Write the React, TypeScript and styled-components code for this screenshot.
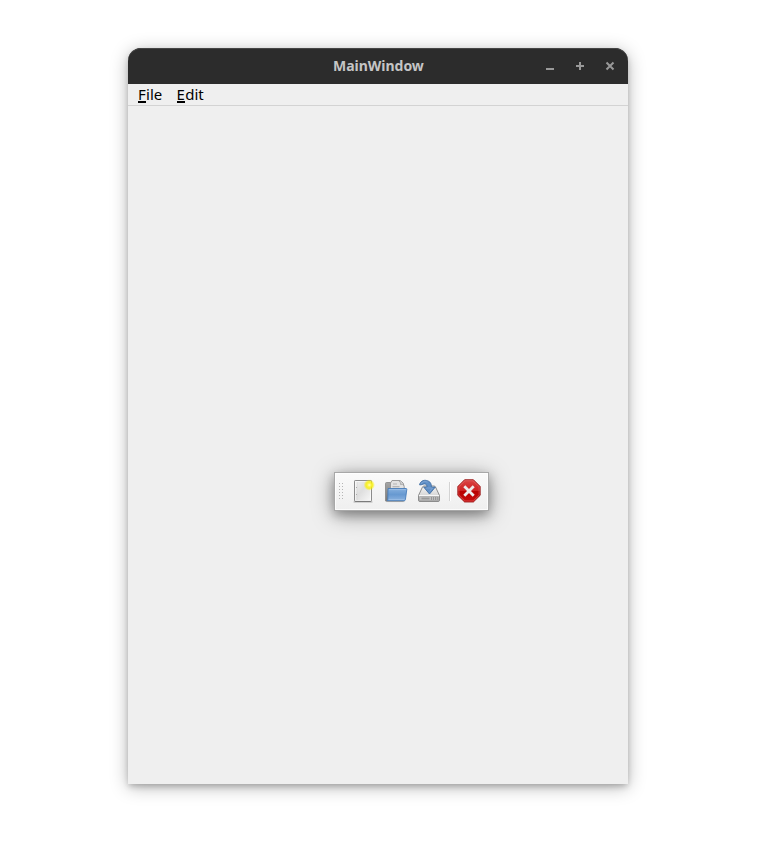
import React from 'react';
import styled, { createGlobalStyle } from 'styled-components';

const GlobalStyle = createGlobalStyle`
  * { box-sizing: border-box; }
  body { margin: 0; background: #fff; }
`;

const Desktop = styled.main`
  height: 844px;
  padding: 48px 0 0 128px;
  overflow: hidden;
  font-family: "Noto Sans", "Open Sans", sans-serif;
`;

const AppWindow = styled.section`
  display: flex;
  flex-direction: column;
  position: relative;
  width: 500px;
  height: 736px;
  background: #efefef;
  border-radius: 13px 13px 0 0;
  box-shadow: 0 3px 18px rgba(0, 0, 0, 0.28), 0 3px 6px -1px rgba(0, 0, 0, 0.24);
`;

const TitleBar = styled.header`
  display: grid;
  grid-template-columns: 1fr 90px 1fr;
  align-items: center;
  height: 36px;
  background: #2c2c2c;
  border-radius: 13px 13px 0 0;
  box-shadow: inset 0 1px #454545;
`;

const Title = styled.h1`
  grid-column: 2;
  margin: 0;
  white-space: nowrap;
  color: #c5c5c5;
  font-size: 14px;
  line-height: 36px;
  letter-spacing: -0.02px;
  font-weight: 700;
`;

const Controls = styled.div`
  display: flex;
  justify-content: flex-end;
  padding-right: 10px;
  gap: 14px;
`;

const ControlButton = styled.button`
  width: 16px;
  height: 16px;
  padding: 0;
  border: 0;
  background: none;
  svg { display: block; }
`;

const MenuBar = styled.nav`
  display: flex;
  height: 22px;
  padding-left: 10px;
  gap: 14px;
  border-bottom: 1px solid #d3d3d3;
`;

const MenuItem = styled.span<{ $width: number; $spacing: number }>`
  width: ${p => p.$width}px;
  white-space: nowrap;
  color: #000;
  font-size: 15px;
  line-height: 21px;
  letter-spacing: ${p => p.$spacing}px;
`;

const Mnemonic = styled.span<{ $width: number }>`
  display: inline-block;
  height: 19px;
  width: ${p => p.$width}px;
  border-bottom: 2px solid #000;
  line-height: 21px;
  vertical-align: top;
`;

const ToolBar = styled.div`
  position: absolute;
  left: 206px;
  top: 424px;
  display: flex;
  align-items: center;
  width: 155px;
  height: 39px;
  padding: 0 0 1px 4px;
  border: 1px solid #a8a8a8;
  background: linear-gradient(#fafafa, #efefef);
  box-shadow: inset 0 0 0 1px rgba(255, 255, 255, 0.75),
    0 4px 22px rgba(0, 0, 0, 0.36), 0 4px 10px rgba(0, 0, 0, 0.28);
`;

const Grip = styled.div`
  width: 5px;
  height: 17px;
  margin-right: 7px;
  background: radial-gradient(circle at 0.5px 0.5px, #b5b5b5 0.7px, transparent 0.8px) 0 0 / 3px 3px;
`;

const ToolButton = styled.button<{ $gap?: number }>`
  width: 24px;
  height: 24px;
  padding: 0;
  border: 0;
  margin-right: ${p => p.$gap ?? 9}px;
  background: none;
  svg { display: block; }
`;

const Divider = styled.i`
  width: 2px;
  height: 19px;
  margin-right: 6px;
  border-left: 1px solid #d3d3d3;
  border-right: 1px solid #fff;
`;

const NewIcon = () => (
  <svg width="24" height="24" viewBox="0 0 24 24">
    <defs>
      <linearGradient id="page" x2="1" y2="1"><stop stopColor="#f2f2f2" /><stop offset=".45" stopColor="#dedede" /><stop offset="1" stopColor="#f9f9f9" /></linearGradient>
      <radialGradient id="sun"><stop stopColor="#fffdc0" /><stop offset=".3" stopColor="#fff647" /><stop offset=".6" stopColor="#f8f000" stopOpacity=".8" /><stop offset="1" stopColor="#fff500" stopOpacity="0" /></radialGradient>
    </defs>
    <path d="M2.5 23h19" stroke="#000" strokeOpacity=".22" strokeWidth="1.2" />
    <rect x="3.5" y="1.5" width="17" height="21" rx=".7" fill="url(#page)" stroke="#8c8c8c" />
    <path d="M4 22.3h16" stroke="#6e6e6e" strokeWidth=".7" />
    <path d="M4.5 2.5h15v19h-15z" fill="none" stroke="#fff" strokeOpacity=".55" />
    <path d="M6.5 3v18" stroke="#d8d8d8" strokeWidth=".5" />
    <path d="M5 8.5h1M5 15.5h1" stroke="#aaa" />
    <circle cx="18.3" cy="6" r="5.7" fill="url(#sun)" />
  </svg>
);

const OpenIcon = () => (
  <svg width="24" height="24" viewBox="0 0 24 24">
    <defs>
      <linearGradient id="folder" x2="0" y2="1"><stop stopColor="#84aedd" /><stop offset=".5" stopColor="#6799d1" /><stop offset="1" stopColor="#8bb2df" /></linearGradient>
      <linearGradient id="folderBack" x2="0" y2="1"><stop stopColor="#a5a5a5" /><stop offset="1" stopColor="#777" /></linearGradient>
    </defs>
    <path d="M1.5 22V4.5q0-1 1-1h5l1 2h10q1 0 1 1V22z" fill="url(#folderBack)" stroke="#858585" strokeWidth=".8" />
    <path d="M6.5 12V4L8 1.5h8q4 2 4.2 6V12z" fill="#e2e2e2" stroke="#999" />
    <path d="M9 5h4M8.5 7.5h7M8.5 9.2h7" stroke="#aaa" strokeWidth=".8" />
    <path d="M15 2q3 3 1 3 3 0 4 2" fill="none" stroke="#aaa" />
    <path d="M4 9.5h18.2q.7 0 .6 1l-1.4 10.2q-.2 1-1.2 1H3.1q.7-.9.7-1.9z" fill="url(#folder)" stroke="#477dba" strokeWidth=".9" />
    <path d="M5 10.6h16.8M4.7 20.7h15.5" stroke="#c0d9f4" strokeOpacity=".5" strokeWidth=".8" />
    <path d="M2 22.6h18.5" stroke="#555" strokeOpacity=".35" strokeWidth=".8" />
  </svg>
);

const SaveIcon = () => (
  <svg width="24" height="24" viewBox="0 0 24 24">
    <defs><linearGradient id="drive" x2="0" y2="1"><stop stopColor="#f3f3f3" /><stop offset=".6" stopColor="#d8d8d8" /><stop offset="1" stopColor="#aaa" /></linearGradient></defs>
    <path d="M1.5 16.5 5.5 8q.5-1 1.5-1h10q1 0 1.5 1l4 8.5V21q0 1.5-1.5 1.5H3q-1.5 0-1.5-1.5z" fill="url(#drive)" stroke="#8c8c8c" />
    <path d="M2 16.5h20" stroke="#f7f7f7" />
    <rect x="2.5" y="17.5" width="19" height="4" rx=".6" fill="#bebebe" stroke="#a0a0a0" strokeWidth=".5" />
    <path d="M4.5 19.5h8" stroke="#999" strokeWidth="1.8" />
    <path d="M14.5 18v3M16.5 18v3M18.5 18v3M20.3 18v3" stroke="#858585" strokeWidth=".7" />
    <path d="M2.5 5.8C3.3 2.4 6.3.7 9.6 1.5c3.8.8 5 3.5 4.7 6.6h4L12.5 15 6.7 8.1H10c.2-2-.8-3.1-2.6-3.2C5.6 4.8 4.5 6.3 2.5 5.8z" fill="#5f8fc6" stroke="#426fa5" strokeWidth=".9" />
    <path d="M4 4.5Q7 1 10.7 3.1M9 9h6.6l-3 3.4" fill="none" stroke="#86abd8" strokeWidth=".7" />
  </svg>
);

const StopIcon = () => (
  <svg width="24" height="24" viewBox="0 0 24 24">
    <defs><linearGradient id="stop" x2="0" y2="1"><stop stopColor="#da4444" /><stop offset=".48" stopColor="#cf2222" /><stop offset=".53" stopColor="#b80000" /><stop offset="1" stopColor="#c80d0d" /></linearGradient></defs>
    <path d="M7.6.7h8.8l6.8 6.8v8.8L16.4 23H7.6L.8 16.3V7.5z" fill="url(#stop)" stroke="#9c2222" strokeWidth=".9" />
    <path d="M8 1.8h8l6.1 6.1v7.9L16 21.9H8l-6.1-6.1V7.9z" fill="none" stroke="#ed7777" strokeOpacity=".55" strokeWidth=".8" />
    <path d="m7.3 7.3 9.4 9.4m0-9.4-9.4 9.4" stroke="#ececec" strokeWidth="2.8" />
  </svg>
);

export default function App() {
  return (
    <>
      <GlobalStyle />
      <Desktop>
        <AppWindow>
          <TitleBar>
            <Title>MainWindow</Title>
            <Controls>
              <ControlButton aria-label="Minimize"><svg width="16" height="16"><path d="M4 11h8" stroke="#999" strokeWidth="2" /></svg></ControlButton>
              <ControlButton aria-label="Maximize"><svg width="16" height="16"><path d="M4 8h8M8 4v8" stroke="#999" strokeWidth="2" /></svg></ControlButton>
              <ControlButton aria-label="Close"><svg width="16" height="16"><path d="m4.5 4.5 7 7m0-7-7 7" stroke="#999" strokeWidth="2" /></svg></ControlButton>
            </Controls>
          </TitleBar>
          <MenuBar>
            <MenuItem $width={24.5} $spacing={0.05}><Mnemonic $width={8}>F</Mnemonic>ile</MenuItem>
            <MenuItem $width={28} $spacing={0}><Mnemonic $width={8.7}>E</Mnemonic>dit</MenuItem>
          </MenuBar>
          <ToolBar>
            <Grip />
            <ToolButton aria-label="New"><NewIcon /></ToolButton>
            <ToolButton aria-label="Open"><OpenIcon /></ToolButton>
            <ToolButton aria-label="Save" $gap={8}><SaveIcon /></ToolButton>
            <Divider />
            <ToolButton aria-label="Stop" $gap={0}><StopIcon /></ToolButton>
          </ToolBar>
        </AppWindow>
      </Desktop>
    </>
  );
}
